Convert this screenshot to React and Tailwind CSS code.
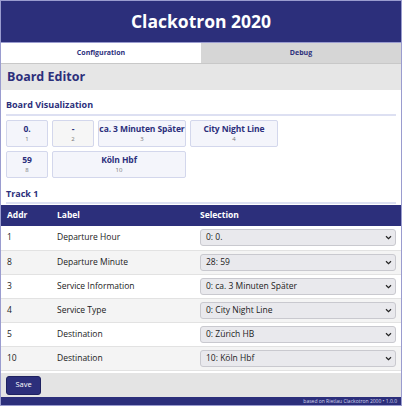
import { useState } from "react";

const tiles = [
  { text: "0.", addr: 1, span: "col-span-1" },
  { text: "-", addr: 2, span: "col-span-1", empty: true },
  { text: "ca. 3 Minuten Später", addr: 3, span: "col-span-2" },
  { text: "City Night Line", addr: 4, span: "col-span-2" },
  { text: "59", addr: 8, span: "col-span-1" },
  { text: "Köln Hbf", addr: 10, span: "col-span-3" },
];

const rows = [
  { addr: 1, label: "Departure Hour", value: "0: 0." },
  { addr: 8, label: "Departure Minute", value: "28: 59" },
  { addr: 3, label: "Service Information", value: "0: ca. 3 Minuten Später" },
  { addr: 4, label: "Service Type", value: "0: City Night Line" },
  { addr: 5, label: "Destination", value: "0: Zürich HB" },
  { addr: 10, label: "Destination", value: "10: Köln Hbf" },
];

function Chevron() {
  return (
    <svg width="7" height="5" viewBox="0 0 7 5" className="shrink-0">
      <path d="M1 1.2 L3.5 3.6 L6 1.2" fill="none" stroke="#222" strokeWidth="1.2" />
    </svg>
  );
}

export default function App() {
  const [tab, setTab] = useState("config");

  return (
    <div
      className="w-[402px] h-[406px] overflow-hidden bg-white border border-[#9a9ccf] flex flex-col text-[#1b1b1b]"
      style={{ fontFamily: '"Open Sans", "Noto Sans", sans-serif' }}
    >
      <div className="h-[42px] shrink-0 bg-[#2c2f7b] flex items-center justify-center border-b border-[#9a9ccf]">
        <h1 className="text-white font-bold text-[17.5px] leading-none">Clackotron 2020</h1>
      </div>

      <div className="h-[21px] shrink-0 flex border-b border-[#c8c8c8]">
        <button
          onClick={() => setTab("config")}
          className={`flex-1 text-[7px] font-bold text-[#2c2f7b] ${tab === "config" ? "bg-white" : "bg-[#d6d6d6]"}`}
        >
          Configuration
        </button>
        <button
          onClick={() => setTab("debug")}
          className={`flex-1 text-[7px] font-bold text-[#2c2f7b] ${tab === "debug" ? "bg-white" : "bg-[#d6d6d6]"}`}
        >
          Debug
        </button>
      </div>

      <div className="h-[26px] shrink-0 bg-[#e6e6e6] flex items-center px-[6px]">
        <h2 className="text-[12.5px] font-bold text-[#2c2f7b]">Board Editor</h2>
      </div>

      <div className="flex-1 flex flex-col px-[5px]">
        <div className="mt-[8px] pb-[2px] border-b-2 border-[#dde0f2] text-[9px] font-bold text-[#2c2f7b]">
          Board Visualization
        </div>

        <div className="grid grid-cols-[repeat(6,42px)] gap-[4px] mt-[4px]">
          {tiles.map((t) => (
            <div
              key={t.addr}
              className={`${t.span} h-[27px] rounded-[2px] border border-[#d3d7ec] flex flex-col items-center pt-[2px] ${t.empty ? "bg-[#f6f6f6]" : "bg-[#f4f5fb]"}`}
            >
              <span className="text-[8.5px] font-bold text-[#2c2f7b] leading-[11px] whitespace-nowrap tracking-[-0.1px]">{t.text}</span>
              <span className="text-[6px] text-[#777] leading-[10px]">{t.addr}</span>
            </div>
          ))}
        </div>

        <div className="mt-[9px] pb-[2px] border-b-2 border-[#dde0f2] text-[9px] font-bold text-[#2c2f7b]">
          Track 1
        </div>

        <table className="mt-[1px] -mx-[5px] w-[400px] text-[8.5px] border-collapse">
          <thead>
            <tr className="bg-[#2c2f7b] text-white h-[21px]">
              <th className="text-left font-bold pl-[6px] w-[56px]">Addr</th>
              <th className="text-left font-bold w-[143px]">Label</th>
              <th className="text-left font-bold">Selection</th>
            </tr>
          </thead>
          <tbody>
            {rows.map((r, i) => (
              <tr
                key={i}
                className={`h-[24px] border-b border-[#e2e2e2] ${i % 2 === 1 ? "bg-[#f4f4f4]" : "bg-white"}`}
              >
                <td className="pl-[6px]">{r.addr}</td>
                <td>{r.label}</td>
                <td className="pr-[5px]">
                  <div className="h-[17px] rounded-[3px] border border-[#c9c9cf] bg-[#e9e9ed] flex items-center justify-between pl-[5px] pr-[3px]">
                    <span>{r.value}</span>
                    <Chevron />
                  </div>
                </td>
              </tr>
            ))}
          </tbody>
        </table>
      </div>

      <div className="h-[24px] shrink-0 bg-[#e4e4e4] flex items-center px-[5px]">
        <button className="h-[19px] w-[35px] rounded-[3px] bg-[#2c2f7b] border border-[#1e2160] text-white text-[7.5px]">
          Save
        </button>
      </div>

      <div className="h-[8px] shrink-0 bg-[#2c2f7b] flex items-center justify-end pr-[4px]">
        <span className="text-[5px] text-[#d4d6f0] leading-none">based on Rietlau Clackotron 2000 • 1.0.0</span>
      </div>
    </div>
  );
}
